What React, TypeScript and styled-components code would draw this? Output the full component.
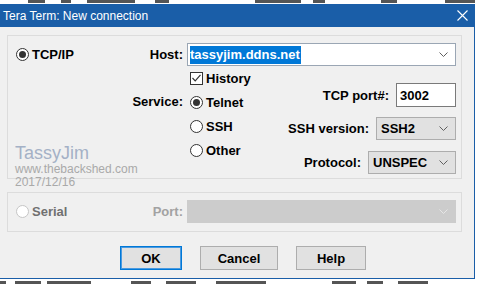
import React from "react";
import styled, { createGlobalStyle } from "styled-components";

const GlobalStyle = createGlobalStyle`
  html, body {
    margin: 0;
    padding: 0;
    background: #ffffff;
  }
  body {
    width: 480px;
    height: 284px;
    overflow: hidden;
    font-family: "Liberation Sans", Arial, sans-serif;
  }
`;

const ACCENT = "#1a5ea8";

const S = {
  Page: styled.div`
    width: 480px;
    height: 284px;
    display: flex;
    flex-direction: column;
    background: #ffffff;
  `,
  Strip: styled.div<{ $h: number; $align: string }>`
    height: ${(p) => p.$h}px;
    display: flex;
    align-items: ${(p) => p.$align};
    overflow: hidden;
  `,
  Speck: styled.span<{ $x: number; $w: number }>`
    margin-left: ${(p) => p.$x}px;
    width: ${(p) => p.$w}px;
    height: 3px;
    flex: none;
    background: #2a2a2a;
    opacity: 0.8;
  `,
  Window: styled.div`
    width: 475px;
    display: flex;
    flex-direction: column;
    border-right: 1px solid ${ACCENT};
    border-bottom: 1px solid ${ACCENT};
    box-sizing: border-box;
  `,
  TitleBar: styled.div`
    height: 23px;
    display: flex;
    align-items: center;
    padding: 0 6px 0 3px;
    background: ${ACCENT};
    color: #ffffff;
    font-size: 12px;
  `,
  Title: styled.span`
    flex: 1;
  `,
  Body: styled.div`
    height: 251px;
    box-sizing: border-box;
    display: flex;
    flex-direction: column;
    padding: 8px 12px 8px 7px;
    background: #f0f0f0;
  `,
  Group: styled.div<{ $h: number; $mt?: number }>`
    position: relative;
    height: ${(p) => p.$h}px;
    margin-top: ${(p) => p.$mt ?? 0}px;
    box-sizing: border-box;
    border: 1px solid #dcdcdc;
    padding: 7px 5px 0 8px;
    display: grid;
    grid-template-columns: 1fr auto 269px;
    grid-auto-rows: min-content;
    column-gap: 4px;
    row-gap: 4px;
    font-size: 13px;
    font-weight: bold;
    color: #000000;
  `,
  Lead: styled.div`
    display: flex;
    align-items: center;
  `,
  FieldLabel: styled.span<{ $muted?: boolean; $top?: number }>`
    align-self: ${(p) => (p.$top ? "start" : "center")};
    margin-top: ${(p) => p.$top ?? 0}px;
    line-height: 16px;
    text-align: right;
    color: ${(p) => (p.$muted ? "#a2a2a2" : "#000000")};
  `,
  Combo: styled.div<{ $disabled?: boolean }>`
    height: 23px;
    box-sizing: border-box;
    display: flex;
    align-items: center;
    padding: 0 7px 0 2px;
    border: 1px solid ${(p) => (p.$disabled ? "#cccccc" : "#9aa6b4")};
    background: ${(p) => (p.$disabled ? "#cccccc" : "#ffffff")};
  `,
  Selected: styled.span`
    height: 18px;
    line-height: 18px;
    background: #0078d7;
    color: #ffffff;
    padding-right: 1px;
  `,
  Spacer: styled.span`
    flex: 1;
  `,
  Lower: styled.div`
    display: flex;
    justify-content: space-between;
  `,
  Options: styled.div`
    display: flex;
    flex-direction: column;
    gap: 8px;
    padding-left: 3px;
  `,
  Choice: styled.label<{ $muted?: boolean }>`
    height: 16px;
    display: flex;
    align-items: center;
    gap: 3px;
    color: ${(p) => (p.$muted ? "#707070" : "#000000")};
  `,
  Radio: styled.span<{ $on?: boolean; $disabled?: boolean }>`
    width: 13px;
    height: 13px;
    box-sizing: border-box;
    border-radius: 50%;
    border: 1px solid ${(p) => (p.$disabled ? "#c6c6c6" : "#333333")};
    background: #ffffff;
    display: flex;
    align-items: center;
    justify-content: center;
    &::after {
      content: "";
      width: 7px;
      height: 7px;
      border-radius: 50%;
      background: #333333;
      display: ${(p) => (p.$on ? "block" : "none")};
    }
  `,
  Check: styled.span`
    width: 13px;
    height: 13px;
    box-sizing: border-box;
    border: 1px solid #333333;
    background: #ffffff;
    display: flex;
    align-items: center;
    justify-content: center;
  `,
  Settings: styled.div`
    display: flex;
    flex-direction: column;
    align-items: flex-end;
    padding-top: 13px;
  `,
  SettingRow: styled.div<{ $gap: number }>`
    display: flex;
    align-items: center;
    gap: 7px;
    margin-top: ${(p) => p.$gap}px;
  `,
  PortInput: styled.div`
    width: 60px;
    height: 24px;
    box-sizing: border-box;
    border: 1px solid #7a7a7a;
    background: #ffffff;
    padding-left: 3px;
    display: flex;
    align-items: center;
  `,
  Select: styled.div<{ $w: number }>`
    width: ${(p) => p.$w}px;
    height: 23px;
    box-sizing: border-box;
    border: 1px solid #adadad;
    background: #e1e1e1;
    display: flex;
    align-items: center;
    padding: 0 7px 0 4px;
  `,
  Watermark: styled.div`
    position: absolute;
    left: 7px;
    top: 107px;
    display: flex;
    flex-direction: column;
    font-weight: normal;
    color: #a9a9a9;
    font-size: 12px;
    line-height: 13px;
  `,
  Brand: styled.span`
    font-size: 18px;
    line-height: 20px;
    color: #a4b1c6;
  `,
  Buttons: styled.div`
    display: flex;
    gap: 18px;
    margin-top: 14px;
    padding-left: 113px;
  `,
  Button: styled.button<{ $w: number; $primary?: boolean }>`
    width: ${(p) => p.$w}px;
    height: 24px;
    box-sizing: border-box;
    padding: 0;
    border: 1px solid ${(p) => (p.$primary ? "#0078d7" : "#adadad")};
    box-shadow: ${(p) => (p.$primary ? "inset 0 0 0 1px #4a9ae0" : "none")};
    background: #e1e1e1;
    font-family: "Liberation Sans", Arial, sans-serif;
    font-size: 13px;
    font-weight: bold;
    color: #000000;
  `,
};

const Chevron = ({ color = "#606060" }: { color?: string }) => (
  <svg width="9" height="5" viewBox="0 0 9 5">
    <polyline points="0.5,0.5 4.5,4.5 8.5,0.5" fill="none" stroke={color} strokeWidth="1" />
  </svg>
);

const topSpecks = [
  [28, 17], [16, 10], [16, 48], [20, 14], [86, 46], [12, 12], [56, 16], [48, 30],
];
const bottomSpecks = [
  [0, 6], [9, 26], [6, 44], [40, 20], [15, 30], [20, 50], [66, 24], [11, 16], [15, 30],
];

const App = () => {
  return (
    <>
      <GlobalStyle />
      <S.Page>
        <S.Strip $h={4} $align="flex-start">
          {topSpecks.map(([x, w], i) => (
            <S.Speck key={i} $x={x} $w={w} />
          ))}
        </S.Strip>
        <S.Window>
          <S.TitleBar>
            <S.Title>Tera Term: New connection</S.Title>
            <svg width="11" height="11" viewBox="0 0 11 11">
              <path d="M0.5 0.5 L10.5 10.5 M10.5 0.5 L0.5 10.5" stroke="#ffffff" strokeWidth="1.1" />
            </svg>
          </S.TitleBar>
          <S.Body>
            <S.Group $h={144}>
              <S.Lead>
                <S.Choice>
                  <S.Radio $on />
                  TCP/IP
                </S.Choice>
              </S.Lead>
              <S.FieldLabel>Host:</S.FieldLabel>
              <S.Combo>
                <S.Selected>tassyjim.ddns.net</S.Selected>
                <S.Spacer />
                <Chevron />
              </S.Combo>

              <span />
              <S.FieldLabel $top={24}>Service:</S.FieldLabel>
              <S.Lower>
                <S.Options>
                  <S.Choice>
                    <S.Check>
                      <svg width="9" height="8" viewBox="0 0 9 8">
                        <polyline points="0.5,4 3.2,6.8 8.5,0.8" fill="none" stroke="#333333" strokeWidth="1.2" />
                      </svg>
                    </S.Check>
                    History
                  </S.Choice>
                  <S.Choice>
                    <S.Radio $on />
                    Telnet
                  </S.Choice>
                  <S.Choice>
                    <S.Radio />
                    SSH
                  </S.Choice>
                  <S.Choice>
                    <S.Radio />
                    Other
                  </S.Choice>
                </S.Options>
                <S.Settings>
                  <S.SettingRow $gap={0}>
                    <span>TCP port#:</span>
                    <S.PortInput>3002</S.PortInput>
                  </S.SettingRow>
                  <S.SettingRow $gap={10}>
                    <span>SSH version:</span>
                    <S.Select $w={80}>
                      SSH2
                      <S.Spacer />
                      <Chevron />
                    </S.Select>
                  </S.SettingRow>
                  <S.SettingRow $gap={11}>
                    <span>Protocol:</span>
                    <S.Select $w={88}>
                      UNSPEC
                      <S.Spacer />
                      <Chevron />
                    </S.Select>
                  </S.SettingRow>
                </S.Settings>
              </S.Lower>

              <S.Watermark>
                <S.Brand>TassyJim</S.Brand>
                <span>www.thebackshed.com</span>
                <span>2017/12/16</span>
              </S.Watermark>
            </S.Group>

            <S.Group $h={40} $mt={13}>
              <S.Lead>
                <S.Choice $muted>
                  <S.Radio $disabled />
                  Serial
                </S.Choice>
              </S.Lead>
              <S.FieldLabel $muted>Port:</S.FieldLabel>
              <S.Combo $disabled>
                <S.Spacer />
                <Chevron color="#e6e6e6" />
              </S.Combo>
            </S.Group>

            <S.Buttons>
              <S.Button $w={62} $primary>OK</S.Button>
              <S.Button $w={78}>Cancel</S.Button>
              <S.Button $w={70}>Help</S.Button>
            </S.Buttons>
          </S.Body>
        </S.Window>
        <S.Strip $h={5} $align="flex-end">
          {bottomSpecks.map(([x, w], i) => (
            <S.Speck key={i} $x={x} $w={w} />
          ))}
        </S.Strip>
      </S.Page>
    </>
  );
};

export default App;
